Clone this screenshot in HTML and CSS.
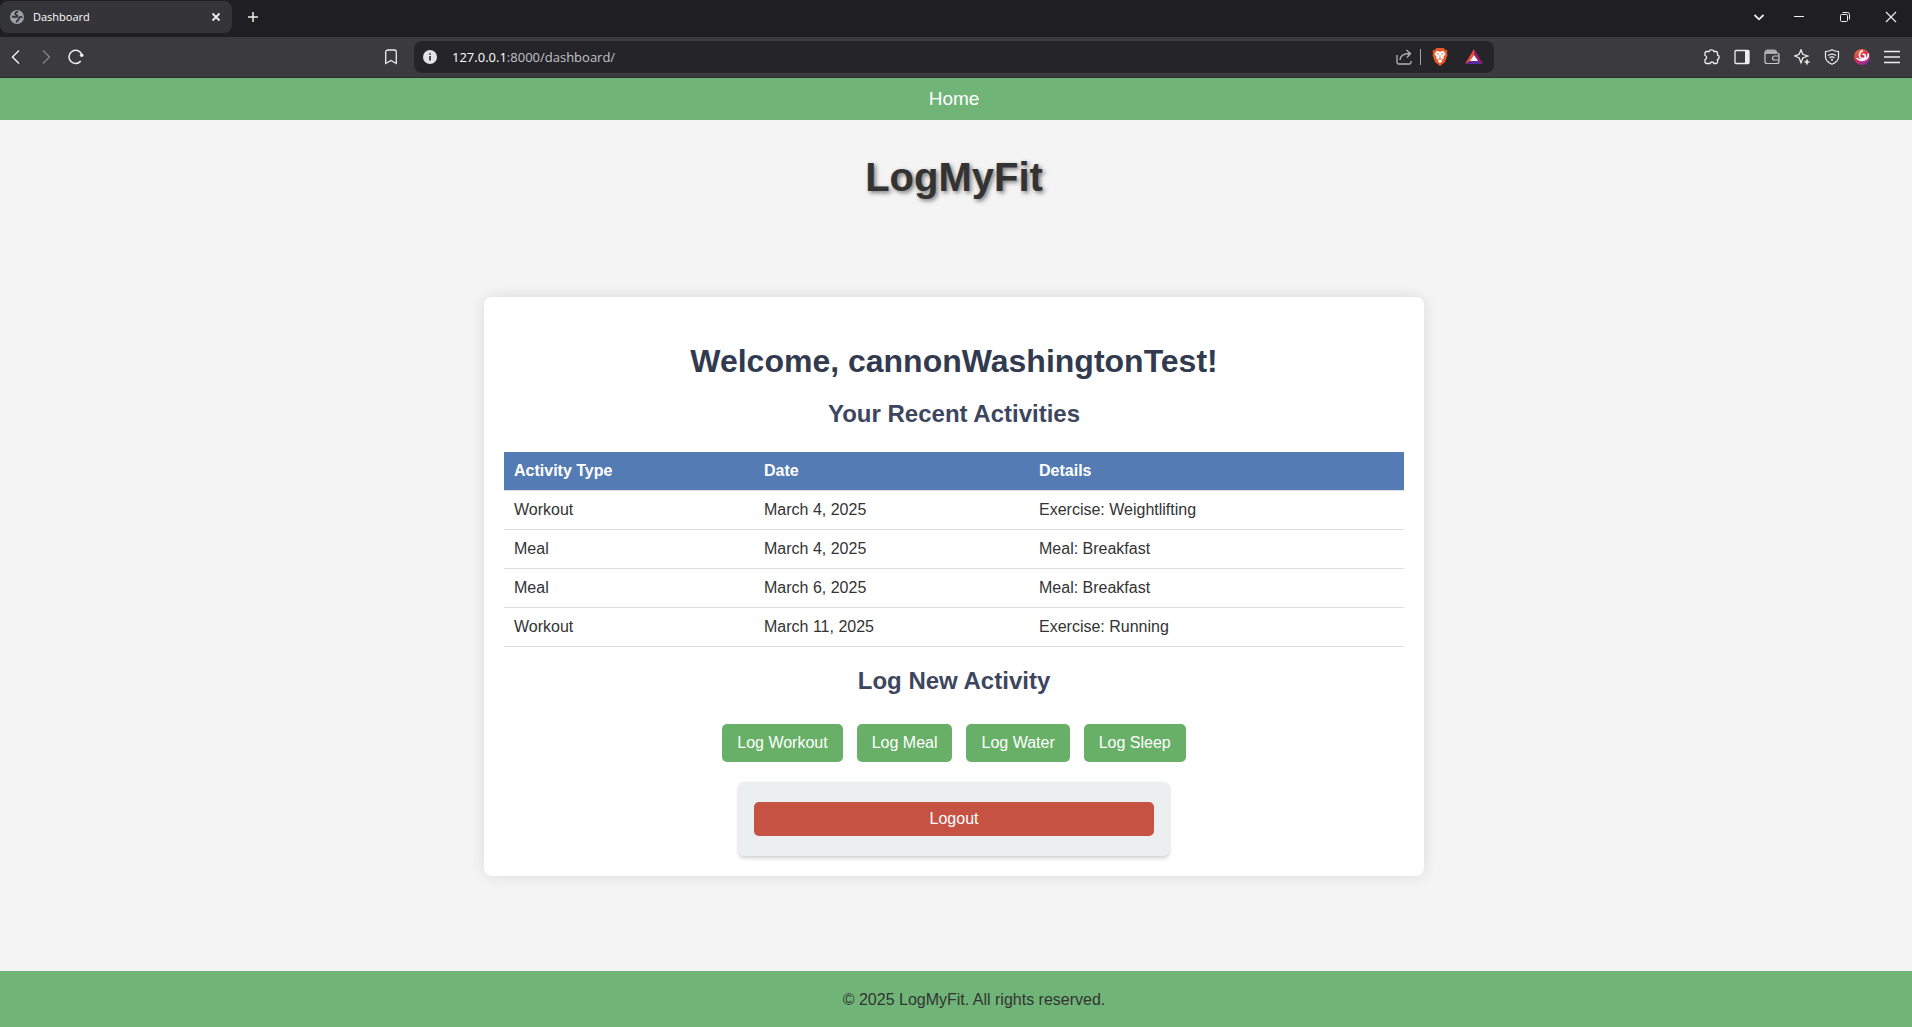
FILE: index.html
```html
<!DOCTYPE html>
<html lang="en">
<head>
<meta charset="utf-8">
<title>Dashboard</title>
<link rel="stylesheet" href="styles.css">
</head>
<body>
<div class="browser">
  <div class="tabs">
    <div class="tab">
      <svg class="icon" viewBox="0 0 16 16"><circle cx="8" cy="8" r="7" fill="#9da1a8"/><path d="M9 2.500C6.500 3 5.500 4.500 6.500 5.500S9 6 8.500 7.500 6 8 3 7.500M13.500 8.500c-2-1-3.500-.5-3.500 1S7.500 11 7.500 13.500" stroke="#35343a" stroke-width="1.800"/></svg>
      <span class="tab-title">Dashboard</span>
      <button class="plain" aria-label="Close tab"><svg class="icon" viewBox="0 0 16 16"><path d="M4.500 4.500l7 7m0-7l-7 7" stroke-width="1.800"/></svg></button>
    </div>
    <button class="plain" aria-label="New tab"><svg class="icon" viewBox="0 0 16 16"><path d="M8 3v10M3 8h10" stroke-width="1.500"/></svg></button>
    <div class="window">
      <button class="plain" aria-label="Search tabs"><svg class="icon" viewBox="0 0 16 16"><path d="M3.500 6L8 10.300 12.500 6" stroke-width="1.800"/></svg></button>
      <button class="plain" aria-label="Minimize"><svg class="icon" viewBox="0 0 16 16"><path d="M3 7.500h10" stroke-width="1"/></svg></button>
      <button class="plain" aria-label="Restore"><svg class="icon" viewBox="0 0 16 16"><rect x="3.500" y="5.500" width="7" height="7" rx="1" stroke-width="1"/><path d="M5.500 3.500h5a2 2 0 0 1 2 2v5" stroke-width="1"/></svg></button>
      <button class="plain" aria-label="Close window"><svg class="icon" viewBox="0 0 16 16"><path d="M3 3l10 10M13 3L3 13" stroke-width="1.200"/></svg></button>
    </div>
  </div>
  <div class="toolbar">
    <div class="history">
      <button class="plain" aria-label="Back"><svg class="icon" viewBox="0 0 16 16"><path d="M11 1.500L4.500 8l6.500 6.500" stroke-width="1.500"/></svg></button>
      <button class="plain dim" aria-label="Forward"><svg class="icon" viewBox="0 0 16 16"><path d="M5 1.500L11.500 8 5 14.500" stroke-width="1.300"/></svg></button>
      <button class="plain" aria-label="Reload"><svg class="icon" viewBox="0 0 16 16"><path d="M12.800 12A6.600 6.600 0 1 1 13.700 5.200" stroke-width="1.500"/><circle cx="13.700" cy="6.200" r="1.800" fill="#eee" stroke="none"/></svg></button>
    </div>
    <button class="plain" aria-label="Bookmark"><svg class="icon" viewBox="0 0 16 16"><path d="M2.700 14.500V3a2 2 0 0 1 2-2h6.600a2 2 0 0 1 2 2v11.500L8 11.500z" stroke-width="1.300"/></svg></button>
    <div class="address">
      <svg class="icon" viewBox="0 0 16 16"><circle cx="8" cy="8" r="7" fill="#e2e2e7"/><path d="M8 7v4.500M8 4.200v1.600" stroke="#29282d" stroke-width="1.600"/></svg>
      <div class="url"><b>127.0.0.1</b>:8000/dashboard/</div>
      <button class="plain" aria-label="Share"><svg class="icon" viewBox="0 0 16 16"><path d="M1 6v7.500a1.500 1.500 0 0 0 1.500 1.500h11a1.500 1.500 0 0 0 1.500-1.500V12M4 11c0-4 3-6.500 10-6.500M10.500 1L14.500 4.500 11 8.500" stroke="#b5b4ba" stroke-width="1.300"/></svg></button>
      <span class="divider"></span>
      <button class="plain" aria-label="Brave Shields"><svg class="icon brand-icon" viewBox="0 0 16 18"><path d="M4.500 0h7L13.500 2 15.500 2.500 15 5.500l.5 1.500-2.500 7L8 18l-5-4L.5 7 1 5.500.5 2.500 2.500 2z" fill="#e8572a"/><path d="M4.500 3L8 3.700 11.500 3 13.500 6l-2.200 3 .5 1.500L9 12l1.500 1L8 15l-2.500-2L7 12l-2.800-1.500.5-1.500L2.500 6z" fill="#fff"/><path d="M4.500 5.700l2.500.5M11.500 5.700L9 6.200M8 7v3.500l-1 .7h2l-1-.7" stroke="#e8572a" stroke-width=".8"/></svg></button>
      <button class="plain" aria-label="Rewards"><svg class="icon brand-icon" viewBox="0 0 18 18"><path d="M9 1L0 16l5-2.500L9 7z" fill="#ee4f37"/><path d="M9 1l9 15-5-2.500L9 7z" fill="#98206a"/><path d="M0 16l5-3h8l5 3z" fill="#5b2b9e"/><path d="M9 7l4 6H5z" fill="#fff"/></svg></button>
    </div>
    <div class="extras">
      <button class="plain" aria-label="Extensions"><svg class="icon" viewBox="0 0 16 16"><path d="M2.500 2.500H5C5.500.3 9.500.3 10 2.500h2a1.500 1.500 0 0 1 1.500 1.500v2c2.200.5 2.200 4 0 4.500v2.500a1.500 1.500 0 0 1-1.500 1.500h-2c-.7-2-3.300-2-4 0H2.500A1.500 1.500 0 0 1 1 13v-2.500c2.200-.7 2.200-3.300 0-4V4a1.500 1.500 0 0 1 1.500-1.500z" stroke-width="1.300"/></svg></button>
      <button class="plain" aria-label="Sidebar"><svg class="icon" viewBox="0 0 16 16"><rect x="1" y="1.500" width="14" height="13" rx="1" stroke-width="1.300"/><path d="M11 1h4v14h-4z" fill="#eee" stroke="none"/></svg></button>
      <button class="plain" aria-label="Wallet"><svg class="icon" viewBox="0 0 16 16"><path d="M1 4V3a2 2 0 0 1 2-2h7.500a2 2 0 0 1 2 2v1z" fill="#aaa" stroke="#aaa" stroke-width="1"/><path d="M1 4v8.500a2 2 0 0 0 2 2h10a2 2 0 0 0 2-2V6a2 2 0 0 0-2-2zM15 7h-4.500a2 2 0 0 0 0 4H15" stroke="#c8c8cc" stroke-width="1.200"/></svg></button>
      <button class="plain" aria-label="Leo AI"><svg class="icon" viewBox="0 0 16 16"><path d="M7 .8L8.800 5.300 13.700 7 8.800 9 7 13.700 5.200 9 .8 7l4.400-1.700z" stroke-width="1.300"/><path d="M13 10.500v5M10.500 13h5" stroke-width="1.600"/></svg></button>
      <button class="plain" aria-label="VPN"><svg class="icon" viewBox="0 0 16 16"><path d="M8 .8c2 1.300 4 1.700 6.500 1.700V8c0 3.500-2.500 5.500-6.500 7.300C4 13.500 1.500 11.500 1.500 8V2.500C4 2.500 6 2.100 8 .8zM4 6.500c2.500-1.800 5.500-1.800 8 0M5.500 8.800c1.500-1.100 3.500-1.100 5 0" stroke-width="1.200"/><circle cx="8" cy="10.800" r="1" fill="#eee" stroke="none"/></svg></button>
      <button class="plain" aria-label="Profile"><svg class="icon brand-icon-small" viewBox="0 0 16 16"><defs><linearGradient id="swirl" x2=".6" y2="1"><stop stop-color="#f48a3c"/><stop offset=".5" stop-color="#d8384a"/><stop offset="1" stop-color="#9a27a0"/></linearGradient></defs><circle cx="8" cy="8" r="8" fill="url(#swirl)"/><path d="M9 1.500C5.500 2.500 4.500 6.500 6.500 8.800c2.500 2 6-.3 4.500-2.800-.8-1-2-.8-2.500-.3M14 4.500c1.500 5.500-6 9.500-11.500 4.500" stroke="#fff" stroke-width="1.600"/></svg></button>
      <button class="plain" aria-label="Menu"><svg class="icon" viewBox="0 0 16 16"><path d="M0 2.500h16M0 8h16M0 13.500h16" stroke-width="1.300"/></svg></button>
    </div>
  </div>
</div>
<nav class="nav"><a href="#">Home</a></nav>
<header class="brand">LogMyFit</header>
<main class="main">
  <section class="card">
    <h1>Welcome, cannonWashingtonTest!</h1>
    <h2>Your Recent Activities</h2>
    <table>
      <thead><tr><th class="col-type">Activity Type</th><th class="col-date">Date</th><th>Details</th></tr></thead>
      <tbody>
        <tr><td>Workout</td><td>March 4, 2025</td><td>Exercise: Weightlifting</td></tr>
        <tr><td>Meal</td><td>March 4, 2025</td><td>Meal: Breakfast</td></tr>
        <tr><td>Meal</td><td>March 6, 2025</td><td>Meal: Breakfast</td></tr>
        <tr><td>Workout</td><td>March 11, 2025</td><td>Exercise: Running</td></tr>
      </tbody>
    </table>
    <h2>Log New Activity</h2>
    <div class="actions">
      <a href="#">Log Workout</a>
      <a href="#">Log Meal</a>
      <a href="#">Log Water</a>
      <a href="#">Log Sleep</a>
    </div>
    <form class="logout"><button type="button">Logout</button></form>
  </section>
</main>
<footer class="footer">© 2025 LogMyFit. All rights reserved.</footer>
</body>
</html>
```
FILE: styles.css
```css
* { box-sizing: border-box; }
body {
  margin: 0;
  min-height: 100vh;
  display: flex;
  flex-direction: column;
  background: #f4f4f4;
  color: #333;
  font: 16px/18px "Liberation Sans", Arial, sans-serif;
}

/* Browser frame */
.browser {
  background: #3b3a3f;
  border-bottom: 1px solid #2d2c31;
  font-family: "Open Sans", "Noto Sans", sans-serif;
  color: #fff;
}
.icon { display: block; width: 16px; height: 16px; fill: none; }
.plain { padding: 0; border: 0; background: none; stroke: #eee; }
.dim { stroke: #85848a; }
.tabs {
  display: flex;
  align-items: center;
  gap: 13px;
  height: 37px;
  padding-bottom: 3px;
  background: #1f1e23;
}
.tab {
  display: flex;
  align-items: center;
  gap: 8px;
  width: 232px;
  height: 32px;
  padding: 0 8px 0 9px;
  border-radius: 8px;
  background: #353439;
}
.tab-title { flex: 1; font-size: 11px; }
.window { display: flex; gap: 30px; margin-left: auto; padding-right: 13px; }
.window .plain:first-child { margin-right: -6px; }
.toolbar { display: flex; align-items: center; height: 40px; }
.history { display: flex; gap: 14px; width: 383px; padding-left: 8px; }
.address {
  display: flex;
  align-items: center;
  flex: 1;
  height: 32px;
  margin-left: 15px;
  padding: 0 11px 0 8px;
  border-radius: 8px;
  background: #252429;
}
.url { flex: 1; padding-left: 14px; font-size: 13px; color: #c3c3c8; }
.url b { font-weight: 400; color: #fff; }
.divider { width: 1px; height: 16px; margin: 0 10px 0 8px; background: #a5a4aa; }
.brand-icon { width: 18px; height: 18px; stroke: none; }
.brand-icon-small { stroke: none; }
.address .plain + .plain { margin-left: 16px; }
.extras { display: flex; gap: 14px; margin-left: 210px; padding-right: 12px; }

/* Site */
.nav {
  padding: 10px 4px 10px 0;
  background: #70b577;
  text-align: center;
  font-size: 19px;
  line-height: 22px;
}
.nav a { color: #fff; text-decoration: none; }
.brand {
  padding: 34px 4px 0 0;
  text-align: center;
  font-size: 40px;
  line-height: 46px;
  font-weight: 700;
  text-shadow: 2px 2px 4px rgba(0, 0, 0, .5);
}
.main { flex: 1; padding: 97px 4px 95px 0; }
.card {
  max-width: 940px;
  margin: 0 auto;
  padding: 46px 20px 20px;
  border-radius: 8px;
  background: #fff;
  box-shadow: 0 0 15px rgba(0, 0, 0, .1);
  text-align: center;
}
h1 { margin: 0 0 20px; font-size: 32px; line-height: 37px; color: #313a4e; }
h2 { margin: 20px 0 25px; font-size: 24px; line-height: 27px; color: #3d465e; }
table { width: 100%; border-collapse: collapse; table-layout: fixed; text-align: left; }
th, td { padding: 10px; border-bottom: 1px solid #ddd; }
th { background: #547bb4; color: #fff; }
.col-type { width: 250px; }
.col-date { width: 275px; }
.actions { display: flex; justify-content: center; gap: 14px; margin-top: 30px; }
.actions a {
  padding: 10px 15px;
  border-radius: 5px;
  background: #68b067;
  color: #fff;
  text-decoration: none;
}
.logout {
  max-width: 430px;
  margin: 20px auto 0;
  padding: 20px 15px;
  border-radius: 5px;
  background: #ebefef;
  box-shadow: 0 2px 4px rgba(0, 0, 0, .2);
}
.logout button {
  display: block;
  width: 100%;
  padding: 8px;
  border: 0;
  border-radius: 5px;
  background: #c65243;
  color: #fff;
  font: inherit;
}
.footer {
  padding: 20px 0 18px 36px;
  background: #70b577;
  text-align: center;
}
```
